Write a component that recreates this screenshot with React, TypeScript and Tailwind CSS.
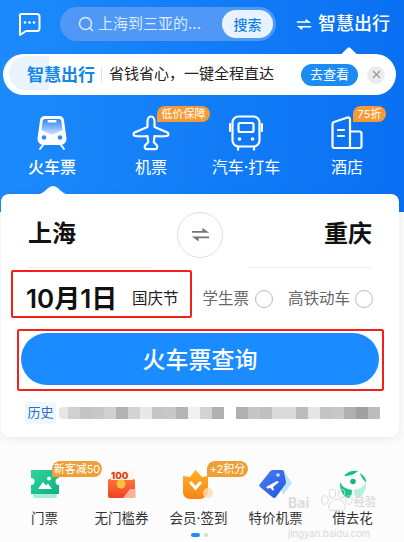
const font = "font-['Inter','Noto_Sans_CJK_SC','Noto_Sans',sans-serif]";

function Chat() {
  return (
    <svg width="24" height="24" viewBox="0 0 24 24" fill="none">
      <path d="M4 2h16a2.500 2.500 0 0 1 2.500 2.500v12A2.500 2.500 0 0 1 20 19H9l-6 4V4.500A2 2 0 0 1 4 2z" stroke="#fff" strokeWidth="2" strokeLinejoin="round" />
      <circle cx="8" cy="10.500" r="1.300" fill="#fff" />
      <circle cx="12.500" cy="10.500" r="1.300" fill="#fff" />
      <circle cx="17" cy="10.500" r="1.300" fill="#fff" />
    </svg>
  );
}

function Swap({ color, w = 16 }: { color: string; w?: number }) {
  return (
    <svg width={w} height={w * 0.8} viewBox="0 0 20 16" fill={color}>
      <path d="M1 4.200h11V0.800l7 5.200H1z" />
      <path d="M19 11.800H8v3.400l-7-5.200h18z" />
    </svg>
  );
}

function Train() {
  return (
    <svg width="34" height="36" viewBox="0 0 34 36">
      <defs>
        <linearGradient id="tg" x1="0" y1="0" x2="0" y2="1">
          <stop offset="0" stopColor="#2a86f6" />
          <stop offset="1" stopColor="#cfe4ff" />
        </linearGradient>
      </defs>
      <path d="M10 1h14a5 5 0 0 1 5 4.500l2.500 18a6 6 0 0 1-6 6.500H8.500a6 6 0 0 1-6-6.500L5 5.500A5 5 0 0 1 10 1z" fill="#fff" />
      <path d="M7.500 7a3 3 0 0 1 3-3h13a3 3 0 0 1 3 3l1 8L17 20 6.500 15z" fill="url(#tg)" />
      <rect x="12.500" y="5" width="9" height="2.500" rx="1.200" fill="#fff" />
      <circle cx="9" cy="22.500" r="2.300" fill="#2f8ff8" />
      <circle cx="25" cy="22.500" r="2.300" fill="#2f8ff8" />
      <path d="M8 30l-3 4M26 30l3 4" stroke="#fff" strokeWidth="2" strokeLinecap="round" />
    </svg>
  );
}

function Plane() {
  return (
    <svg width="38" height="36" viewBox="0 0 38 36" fill="none" stroke="#fff" strokeWidth="2.200" strokeLinejoin="round">
      <path d="M19 1.500c2.300 0 3.500 2.500 3.500 5v5.500l13 5.500c1 .5 1.300 2.700.2 3.200-4 1-9 .5-13.200.5l-.7 6 3 3c1 1.300.4 4-1.300 4h-9c-1.700 0-2.300-2.700-1.300-4l3-3-.7-6c-4.200 0-9.200.5-13.200-.5-1.100-.5-.8-2.700.2-3.200l13-5.500V6.500c0-2.500 1.200-5 3.500-5z" />
    </svg>
  );
}

function Bus() {
  return (
    <svg width="34" height="36" viewBox="0 0 34 36" fill="none" stroke="#fff" strokeWidth="2.200">
      <rect x="3.500" y="1.500" width="27" height="30" rx="6" />
      <rect x="9.500" y="8" width="15" height="9" rx="1.500" />
      <path d="M1 9v7M33 9v7" strokeLinecap="round" />
      <circle cx="10.500" cy="24" r="1.800" fill="#fff" stroke="none" />
      <circle cx="23.500" cy="24" r="1.800" fill="#fff" stroke="none" />
      <path d="M9 32v3.500M25 32v3.500" />
    </svg>
  );
}

function Hotel() {
  return (
    <svg width="32" height="34" viewBox="0 0 32 34" fill="none" stroke="#fff" strokeWidth="2.200" strokeLinejoin="round">
      <path d="M19 32V3.500a2 2 0 0 0-2.500-2L3 6a2 2 0 0 0-1.500 2v22a2 2 0 0 0 2 2h25a2 2 0 0 0 2-2V17.500a2 2 0 0 0-2-2H19" />
      <path d="M7 14h6M7 20h6" strokeLinecap="round" />
    </svg>
  );
}

function Ticket() {
  return (
    <svg width="30" height="30" viewBox="0 0 30 30">
      <defs>
        <linearGradient id="tk" x1="0" y1="0" x2="1" y2="1">
          <stop offset="0" stopColor="#2fd59b" />
          <stop offset="1" stopColor="#0fb080" />
        </linearGradient>
      </defs>
      <rect x="3" y="24" width="24" height="5" rx="2" fill="#a5ece0" />
      <path d="M1 1h28v8a3.500 3.500 0 0 0 0 7v9H1v-9a3.500 3.500 0 0 0 0-7z" fill="url(#tk)" />
      <path d="M8 20l5-7 3 3.500 2-2 4 5.500z" fill="#fff" />
      <circle cx="19" cy="9.500" r="2" fill="#fff" />
    </svg>
  );
}

function Coupon() {
  return (
    <svg width="30" height="30" viewBox="0 0 30 30">
      <defs>
        <linearGradient id="cp" x1="0" y1="0" x2="0" y2="1">
          <stop offset="0" stopColor="#ff7a45" />
          <stop offset="1" stopColor="#f0401f" />
        </linearGradient>
      </defs>
      <path d="M1 11l5-3h18l4 3v16a2 2 0 0 1-2 2H3a2 2 0 0 1-2-2z" fill="url(#cp)" />
      <rect x="4" y="2" width="22" height="9" fill="#fff5df" />
      <text x="4" y="10" fontSize="9.500" fontWeight="800" fill="#e2371b" fontFamily="Inter,sans-serif">100</text>
      <circle cx="14" cy="15" r="4.500" fill="#f7c23b" />
      <path d="M23 20h6v9H16z" fill="#ffc9b5" opacity="0.800" />
    </svg>
  );
}

function Shield() {
  return (
    <svg width="34" height="30" viewBox="0 0 34 30">
      <defs>
        <linearGradient id="sh" x1="0" y1="0" x2="0" y2="1">
          <stop offset="0" stopColor="#ffb11f" />
          <stop offset="1" stopColor="#f7851a" />
        </linearGradient>
      </defs>
      <path d="M1 7l7 1L13.500 1 20 8l6-1v15c0 4-4 8-8 8H8c-4 0-7-3-7-7z" fill="url(#sh)" />
      <path d="M9 14l4.500 5 4.500-5" fill="none" stroke="#fff" strokeWidth="3.200" strokeLinecap="round" />
      <circle cx="26" cy="24" r="5" fill="#ffdcb0" opacity="0.800" />
    </svg>
  );
}

function PlaneTag() {
  return (
    <svg width="34" height="30" viewBox="0 0 34 30">
      <defs>
        <linearGradient id="pt" x1="0" y1="0" x2="1" y2="1">
          <stop offset="0" stopColor="#4a7df6" />
          <stop offset="1" stopColor="#2458e0" />
        </linearGradient>
      </defs>
      <path d="M16 2h9l8 12-9 12z" fill="#bfe3fb" />
      <path d="M14 1h9a2 2 0 0 1 2 2l2 10a3 3 0 0 1-.8 2.500L17 28a2.500 2.500 0 0 1-3.500.2L1 18a2 2 0 0 1-.2-2.800L11 2.500A3.500 3.500 0 0 1 14 1z" fill="url(#pt)" />
      <path d="M7 18l11-6 2 1-6 5 1 3-1.500.5-2-2.500-3 .5z" fill="#fff" />
      <circle cx="19" cy="6" r="1.800" fill="#cfe6ff" />
    </svg>
  );
}

function Leaf() {
  return (
    <svg width="28" height="28" viewBox="0 0 28 28">
      <path d="M5 6C8 1.500 14 0 19 1c-3 3-8 5-14 5z" fill="#18c18c" />
      <path d="M21 3c3 2 6 5 6.500 9.500C25 11 22 7 21 3z" fill="#18c18c" />
      <circle cx="14" cy="11.500" r="2.800" fill="#18b884" />
      <path d="M1 12c2 5 6 7 12 8 0 4-1 7-3 8C5 28 0 20 1 12z" fill="#1fc28f" />
      <path d="M27 12c-2 5-6 7-12 8 0 4 1 7 3 8 5 0 10-8 9-16z" fill="#b8efd8" />
    </svg>
  );
}

function Paw() {
  return (
    <svg width="38" height="24" viewBox="0 0 38 26" fill="none" stroke="#d6d6d6" strokeWidth="1">
      <ellipse cx="6" cy="13" rx="3.500" ry="4.500" />
      <ellipse cx="14" cy="6" rx="3.500" ry="4.500" />
      <ellipse cx="24" cy="6" rx="3.500" ry="4.500" />
      <ellipse cx="32" cy="13" rx="3.500" ry="4.500" />
      <path d="M19 12c5 0 9 5 9 9 0 3-3 4-5 3.500-3-.7-5-.7-8 0-2 .5-5-.5-5-3.500 0-4 4-9 9-9z" />
    </svg>
  );
}

const mosaicA = ["w-[9px] rounded-l-[4px] bg-[#e6e6e6]", "w-[12px] bg-[#d0d0d0]", "w-[12px] bg-[#c4c4c4]", "w-[12px] bg-[#c8c8c8]", "w-[12px] bg-[#d0d0d0]", "w-[12px] bg-[#b2b2b2]", "w-[12px] bg-[#d2d2d2]", "w-[12px] bg-[#e8e8e8]", "w-[12px] bg-[#c6c6c6]", "w-[12px] bg-[#c8c8c8]", "w-[12px] bg-[#b4b4b4]", "w-[12px] bg-[#f0f0f0]", "w-[12px] bg-[#d2d2d2]", "w-[12px] bg-[#b0b0b0]"];
const mosaicB = ["bg-[#b0b0b0]", "bg-[#c6c6c6]", "bg-[#c0c0c0]", "bg-[#dadada]", "bg-[#dadada]", "bg-[#bcbcbc]", "bg-[#e6e6e6]", "bg-[#c4c4c4]", "bg-[#c8c8c8]", "bg-[#b0b0b0]", "bg-[#a0a0a0]", "bg-[#bcbcbc]"];

const badge = "absolute flex h-[16px] items-center justify-center rounded-t-full rounded-r-full rounded-bl-[4px] text-[11px] whitespace-nowrap text-white";

function NavItem({ icon, label, bold, tag, width }: { icon: React.ReactNode; label: React.ReactNode; bold?: boolean; tag?: React.ReactNode; width: string }) {
  return (
    <div className={`relative flex flex-col items-center ${width}`}>
      <div className="flex h-[36px] items-center justify-center">{icon}</div>
      {tag}
      <span className={`mt-[5px] text-[16px] leading-[22px] whitespace-nowrap text-white ${bold ? "font-medium" : ""}`}>{label}</span>
    </div>
  );
}

function Tile({ icon, label, tag }: { icon: React.ReactNode; label: React.ReactNode; tag?: React.ReactNode }) {
  return (
    <div className="relative flex w-[77px] flex-col items-center">
      <div className="flex h-[32px] items-center justify-center">{icon}</div>
      {tag}
      <span className="mt-[8px] text-[13.5px] leading-[20px] whitespace-nowrap text-[#333]">{label}</span>
    </div>
  );
}

export default function App() {
  return (
    <div className={`relative h-[542px] w-[404px] overflow-hidden bg-[#fcfcfc] ${font}`}>
      <div className="flex h-[212px] flex-col bg-gradient-to-r from-[#1c8afb] to-[#0a70f3]">
        <div className="flex items-center pt-[7px] pl-[17px]">
          <Chat />
          <div className="ml-[19px] flex h-[34px] w-[216px] items-center rounded-full bg-[#4f98f6] pr-[3px] pl-[18px]">
            <svg width="16" height="16" viewBox="0 0 16 16" fill="none" stroke="#dcebff" strokeWidth="1.500" strokeLinecap="round">
              <circle cx="7.500" cy="7.500" r="6" />
              <path d="M12 12l2.500 2.500" />
            </svg>
            <span className="ml-[4px] flex-1 text-[15px] whitespace-nowrap text-[#dcebff]">上海到三亚的...</span>
            <span className="flex h-[28px] w-[51px] items-center justify-center rounded-full bg-[#e8f3ff] text-[14px] font-medium text-[#0f7ee6]">搜索</span>
          </div>
          <div className="ml-[20px] flex items-center">
            <Swap color="#fff" />
            <span className="ml-[6px] text-[18px] leading-[24px] font-medium whitespace-nowrap text-white">智慧出行</span>
          </div>
        </div>

        <div className="relative mt-[13px] ml-[3px] flex h-[41px] w-[393px] items-center rounded-full bg-white pl-[24px]">
          <div className="absolute -top-[5px] left-[340px] h-[12px] w-[12px] rotate-45 rounded-[2px] bg-white" />
          <div className="absolute top-[2px] left-[6px] h-[34px] w-[40px] rounded-l-full bg-[#e9f3fe]" />
          <span className="relative text-[17px] leading-[22px] font-bold whitespace-nowrap text-[#1187e8]">智慧出行</span>
          <span className="mr-[7px] ml-[6px] h-[16px] w-px bg-[#dde3ea]" />
          <span className="text-[15px] whitespace-nowrap text-[#222]">省钱省心，一键全程直达</span>
          <span className="ml-[27px] flex h-[22px] w-[57px] shrink-0 items-center justify-center rounded-full bg-[#1c8cf2] text-[13px] text-white">去查看</span>
          <span className="ml-[9px] flex h-[18px] w-[18px] shrink-0 items-center justify-center rounded-full bg-[#ececec]">
            <svg width="9" height="9" viewBox="0 0 9 9" stroke="#9a9a9a" strokeWidth="1.400"><path d="M1 1l7 7M8 1L1 8" /></svg>
          </span>
        </div>

        <div className="mt-[20px] flex pl-[2px]">
          <NavItem width="w-[100px]" icon={<Train />} label="火车票" bold />
          <NavItem
            width="w-[98px]"
            icon={<Plane />}
            label="机票"
            tag={<span className={`${badge} -top-[9px] left-[55px] w-[53px] bg-[#f59a35]`}>低价保障</span>}
          />
          <NavItem width="w-[92px]" icon={<Bus />} label="汽车·打车" />
          <NavItem
            width="w-[110px]"
            icon={<Hotel />}
            label="酒店"
            tag={<span className={`${badge} -top-[9px] left-[61px] w-[33px] bg-[#f59a35]`}>75折</span>}
          />
        </div>
      </div>

      <div className="relative z-10 mx-[1px] -mt-[18px] h-[243px] w-[398px] rounded-[8px] bg-white shadow-[0_2px_8px_rgba(0,0,0,0.08)]">
        <svg className="absolute -top-[8px] left-[30px]" width="44" height="9" viewBox="0 0 44 9" fill="#fff">
          <path d="M0 9c8 0 12-2 15-5 3-3 5-4 7-4s4 1 7 4c3 3 7 5 15 5z" />
        </svg>
        <div className="relative flex h-[73px] items-start px-[27px] pt-[18px]">
          <span className="pt-[4px] text-[24px] leading-[36px] font-bold text-[#111]">上海</span>
          <div className="flex flex-1 justify-center">
            <div className="flex h-[46px] w-[46px] items-center justify-center rounded-full border border-[#e0e0e0]">
              <Swap color="#777" w={19} />
            </div>
          </div>
          <span className="pt-[4px] text-[24px] leading-[36px] font-bold text-[#111]">重庆</span>
        </div>
        <div className="flex justify-between px-[27px]">
          <div className="h-px w-[124px] bg-[#eeeeee]" />
          <div className="h-px w-[124px] bg-[#eeeeee]" />
        </div>
        <div className="flex h-[50px] items-center pt-[12px] pl-[25px]">
          <span className="w-[92px] text-[26px] leading-[34px] font-semibold whitespace-nowrap text-[#111]">10月1日</span>
          <span className="ml-[14px] text-[15.5px] whitespace-nowrap text-[#222]">国庆节</span>
          <span className="ml-[24px] text-[15.5px] whitespace-nowrap text-[#666]">学生票</span>
          <span className="ml-[6px] h-[18px] w-[18px] rounded-full border-[1.5px] border-[#bbbbbb]" />
          <span className="ml-[15px] text-[15.5px] whitespace-nowrap text-[#666]">高铁动车</span>
          <span className="ml-[5px] h-[18px] w-[18px] rounded-full border-[1.5px] border-[#bbbbbb]" />
        </div>
        <div className="mx-[20px] mt-[15px] flex h-[52px] items-center justify-center rounded-full bg-[#1a8cff] pt-[3px] text-[23px] font-medium text-white">火车票查询</div>
        <div className="mt-[17px] ml-[24px] flex items-center">
          <span className="flex h-[22px] w-[31px] items-center justify-center rounded-[3px] bg-[#eef6ff] text-[13px] text-[#2a6fb8]">历史</span>
          <div className="ml-[3px] flex h-[12px]">
            {mosaicA.map((c, i) => (
              <div key={i} className={`h-[12px] ${c}`} />
            ))}
          </div>
          <div className="ml-[12px] flex h-[12px]">
            {mosaicB.map((c, i) => (
              <div key={i} className={`h-[12px] w-[12px] ${c}`} />
            ))}
          </div>
        </div>
      </div>

      <div className="mt-[31px] flex pl-[6px]">
        <Tile
          icon={<Ticket />}
          label="门票"
          tag={<span className={`${badge} -top-[7px] left-[46px] w-[50px] bg-[#eea036]`}>新客减50</span>}
        />
        <Tile icon={<Coupon />} label="无门槛券" />
        <Tile
          icon={<Shield />}
          label="会员·签到"
          tag={<span className={`${badge} -top-[7px] left-[47px] w-[41px] bg-[#eea036]`}>+2积分</span>}
        />
        <Tile icon={<PlaneTag />} label="特价机票" />
        <Tile icon={<Leaf />} label="借去花" />
      </div>
      <div className="mt-[5px] flex justify-center gap-[4px] pr-[5px]">
        <span className="h-[4px] w-[9px] rounded-full bg-[#1a8cff]" />
        <span className="h-[4px] w-[4px] rounded-full bg-[#d5d5d5]" />
      </div>

      <div className="absolute top-[270px] left-[11px] z-20 h-[48px] w-[181px] rounded-[2px] border-[2px] border-[#f4201a]" />
      <div className="absolute top-[329px] left-[17px] z-20 h-[62px] w-[367px] rounded-[2px] border-[2px] border-[#f4201a]" />

      <div className="absolute top-[488px] left-[318px] z-20"><Paw /></div>
      <span className="absolute top-[496px] left-[288px] z-20 text-[14px] leading-[13px] font-bold text-[#dcdcdc]">Bai</span>
      <span className="absolute top-[496px] left-[354px] z-20 text-[11px] leading-[13px] font-medium text-[#d8d8d8]">经验</span>
      <span className="absolute top-[528px] left-[288px] z-20 text-[9.5px] leading-[11px] whitespace-nowrap text-[#d8d8d8]">jingyan.baidu.com</span>
    </div>
  );
}
